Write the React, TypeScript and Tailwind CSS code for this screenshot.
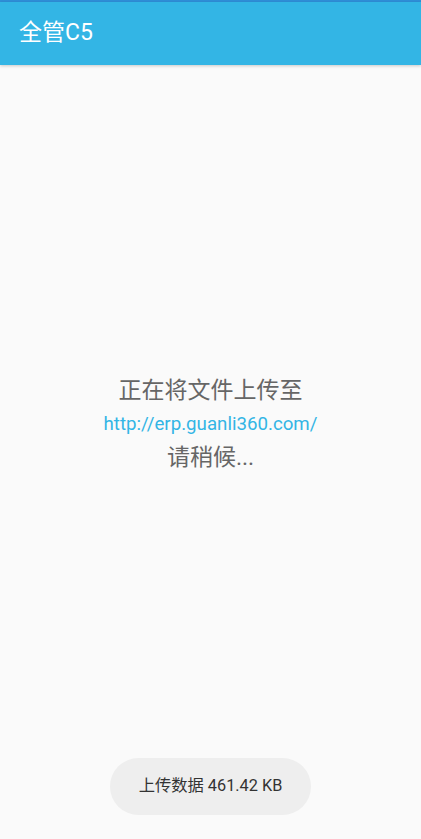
export default function App() {
  return (
    <div
      className="relative flex h-[839px] w-[421px] flex-col overflow-hidden bg-[#fafafa]"
      style={{ fontFamily: 'Roboto, "Noto Sans CJK SC", sans-serif' }}
    >
      <div className="h-[2px] w-full bg-[#2f8fd8]" />
      <div className="flex h-[63px] items-center bg-[#33b5e5] pl-[19px] shadow-[0_1px_3px_rgba(0,0,0,0.2)]">
        <span className="text-[23px] font-normal text-white">全管C5</span>
      </div>
      <div className="flex flex-1 flex-col items-center pt-[309px]">
        <div className="text-[23px] leading-[34px] text-[#666666]">正在将文件上传至</div>
        <div className="text-[18.7px] leading-[32px] text-[#33b5e5]">http://erp.guanli360.com/</div>
        <div className="text-[23px] leading-[36px] text-[#666666]">请稍候...</div>
      </div>
      <div className="absolute left-[110px] top-[758px] flex h-[57px] w-[201px] items-center justify-center rounded-full bg-[#eeeeee]">
        <span className="text-[16.3px] text-[#333333]">上传数据 461.42 KB</span>
      </div>
    </div>
  );
}
